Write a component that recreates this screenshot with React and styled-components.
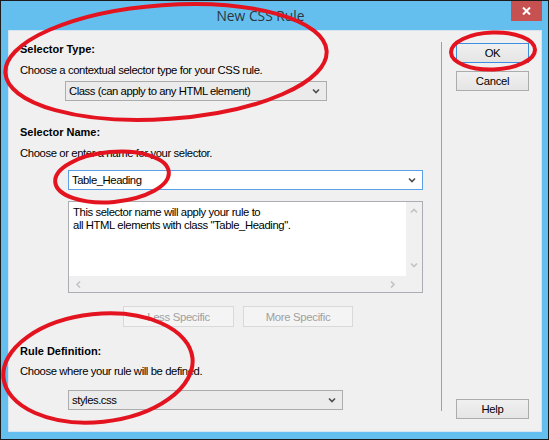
import React from 'react';
import styled, { createGlobalStyle } from 'styled-components';

const GlobalStyle = createGlobalStyle`
  html, body {
    margin: 0;
    padding: 0;
    background: #ffffff;
  }
  * {
    box-sizing: border-box;
  }
`;

const Window = styled.div`
  position: relative;
  width: 549px;
  height: 440px;
  border: 1px solid #1b1b1b;
  background: #65bfee;
  display: flex;
  flex-direction: column;
  overflow: hidden;
  font-family: "Liberation Sans", Arial, sans-serif;
`;

const TitleBar = styled.div`
  height: 29px;
  display: grid;
  grid-template-columns: 1fr auto 1fr;
  align-items: start;
`;

const Title = styled.div`
  grid-column: 2;
  margin-right: 28px;
  font-family: "Open Sans", "Noto Sans", sans-serif;
  font-size: 13.8px;
  line-height: 29px;
  color: #2b3640;
`;

const CloseButton = styled.div`
  grid-column: 3;
  justify-self: end;
  width: 31px;
  height: 20px;
  margin-right: 6px;
  background: #c75050;
  display: flex;
  align-items: center;
  justify-content: center;
`;

const Client = styled.div`
  flex: 1;
  margin: 0 6px 7px 7px;
  border: 1px solid #d6e4ef;
  background: #f0f0f0;
  display: flex;
`;

const Main = styled.div`
  width: 432px;
  padding: 11px 0 0 11px;
  display: flex;
  flex-direction: column;
  align-items: flex-start;
`;

const Label = styled.div`
  margin-top: ${p => p.$top || 0}px;
  font-size: 11px;
  font-weight: bold;
  line-height: 14px;
  color: #000;
`;

const Hint = styled.div`
  margin-top: ${p => p.$top || 0}px;
  font-size: 11.3px;
  letter-spacing: -0.4px;
  line-height: 14px;
  color: #000;
`;

const Dropdown = styled.div`
  margin-top: ${p => p.$top}px;
  margin-left: ${p => p.$indent}px;
  width: ${p => p.$width}px;
  height: ${p => p.$height || 20}px;
  border: 1px solid ${p => (p.$focused ? '#5aa0e6' : '#acacac')};
  background: ${p => (p.$editable ? '#ffffff' : '#ebebeb')};
  display: flex;
  align-items: center;
  justify-content: space-between;
  padding: 0 6px 0 3px;
  font-size: 11.3px;
  letter-spacing: -0.45px;
  color: #000;
`;

const InfoBox = styled.div`
  margin-top: 11px;
  margin-left: 48px;
  width: 355px;
  height: 92px;
  border: 1px solid #abadb3;
  background: #f0f0f0;
  display: grid;
  grid-template-columns: 1fr 16px;
  grid-template-rows: 1fr 16px;
`;

const InfoText = styled.div`
  background: #ffffff;
  padding: 4px 4px;
  font-size: 11.3px;
  letter-spacing: -0.4px;
  line-height: 13px;
  color: #000;
`;

const VScroll = styled.div`
  display: flex;
  flex-direction: column;
  justify-content: space-between;
  align-items: center;
  padding: 6px 0 8px;
`;

const HScroll = styled.div`
  grid-column: 1 / span 2;
  display: flex;
  justify-content: space-between;
  align-items: center;
  padding: 0 26px 0 6px;
`;

const SpecificRow = styled.div`
  margin-top: 13px;
  margin-left: 103px;
  display: flex;
  gap: 9px;
`;

const Button = styled.div`
  width: ${p => p.$width || 73}px;
  height: ${p => p.$height || 20}px;
  margin-top: ${p => p.$top || 0}px;
  border: 1px solid ${p => (p.$disabled ? '#d9d9d9' : p.$default ? '#3c8fe0' : '#acacac')};
  background: ${p => (p.$disabled ? '#f4f4f4' : 'linear-gradient(#f0f0f0, #e5e5e5)')};
  color: ${p => (p.$disabled ? '#a0a0a0' : '#000')};
  display: flex;
  align-items: center;
  justify-content: center;
  font-size: 11.3px;
  letter-spacing: -0.3px;
`;

const Separator = styled.div`
  width: 1px;
  margin: 11px 0 20px;
  background: #a0a0a0;
`;

const Side = styled.div`
  flex: 1;
  padding: 12px 11px 12px 14px;
  display: flex;
  flex-direction: column;
`;

const HelpButton = styled(Button)`
  margin-top: auto;
`;

const Overlay = styled.svg`
  position: absolute;
  left: -1px;
  top: -1px;
  pointer-events: none;
`;

const Chevron = ({ dir = 'down', color = '#4d4d4d' }) => {
  const paths = {
    down: 'M1 1.5 L4 4.5 L7 1.5',
    up: 'M1 4.5 L4 1.5 L7 4.5',
    left: 'M5 0.5 L2 3.5 L5 6.5',
    right: 'M2 0.5 L5 3.5 L2 6.5',
  };
  const vertical = dir === 'down' || dir === 'up';
  return (
    <svg width={vertical ? 8 : 7} height={vertical ? 6 : 7} viewBox={vertical ? '0 0 8 6' : '0 0 7 7'}>
      <path d={paths[dir]} fill="none" stroke={color} strokeWidth="1.6" />
    </svg>
  );
};

const ellipses = [
  { cx: 166, cy: 62, rx: 161, ry: 57, rot: -4 },
  { cx: 493, cy: 51, rx: 42, ry: 18.5, rot: -2 },
  { cx: 112, cy: 177, rx: 57, ry: 25, rot: -5 },
  { cx: 98, cy: 368, rx: 95, ry: 54, rot: -6 },
];

export default function App() {
  return (
    <>
      <GlobalStyle />
      <Window>
        <TitleBar>
          <Title>New CSS Rule</Title>
          <CloseButton>
            <svg width="9" height="8" viewBox="0 0 9 8">
              <path d="M1 0.5 L8 7.5 M8 0.5 L1 7.5" stroke="#fff" strokeWidth="2" />
            </svg>
          </CloseButton>
        </TitleBar>
        <Client>
          <Main>
            <Label>Selector Type:</Label>
            <Hint $top={7}>Choose a contextual selector type for your CSS rule.</Hint>
            <Dropdown $top={4} $indent={45} $width={262}>
              <span>Class (can apply to any HTML element)</span>
              <Chevron />
            </Dropdown>

            <Label $top={24}>Selector Name:</Label>
            <Hint $top={7}>Choose or enter a name for your selector.</Hint>
            <Dropdown $top={10} $indent={48} $width={355} $editable $focused>
              <span>Table_Heading</span>
              <Chevron />
            </Dropdown>
            <InfoBox>
              <InfoText>
                This selector name will apply your rule to
                <br />
                all HTML elements with class "Table_Heading".
              </InfoText>
              <VScroll>
                <Chevron dir="up" color="#c2c2c2" />
                <Chevron dir="down" color="#c2c2c2" />
              </VScroll>
              <HScroll>
                <Chevron dir="left" color="#c2c2c2" />
                <Chevron dir="right" color="#c2c2c2" />
              </HScroll>
            </InfoBox>
            <SpecificRow>
              <Button $disabled $width={111} $height={21}>Less Specific</Button>
              <Button $disabled $width={110} $height={21}>More Specific</Button>
            </SpecificRow>

            <Label $top={17}>Rule Definition:</Label>
            <Hint $top={6}>Choose where your rule will be defined.</Hint>
            <Dropdown $top={12} $indent={48} $width={275}>
              <span>styles.css</span>
              <Chevron />
            </Dropdown>
          </Main>
          <Separator />
          <Side>
            <Button $default>OK</Button>
            <Button $top={8}>Cancel</Button>
            <HelpButton>Help</HelpButton>
          </Side>
        </Client>
        <Overlay width="549" height="440" viewBox="0 0 549 440">
          {ellipses.map((e, i) => (
            <ellipse
              key={i}
              cx={e.cx}
              cy={e.cy}
              rx={e.rx}
              ry={e.ry}
              transform={`rotate(${e.rot} ${e.cx} ${e.cy})`}
              fill="none"
              stroke="#e3141f"
              strokeWidth="4"
            />
          ))}
        </Overlay>
      </Window>
    </>
  );
}
